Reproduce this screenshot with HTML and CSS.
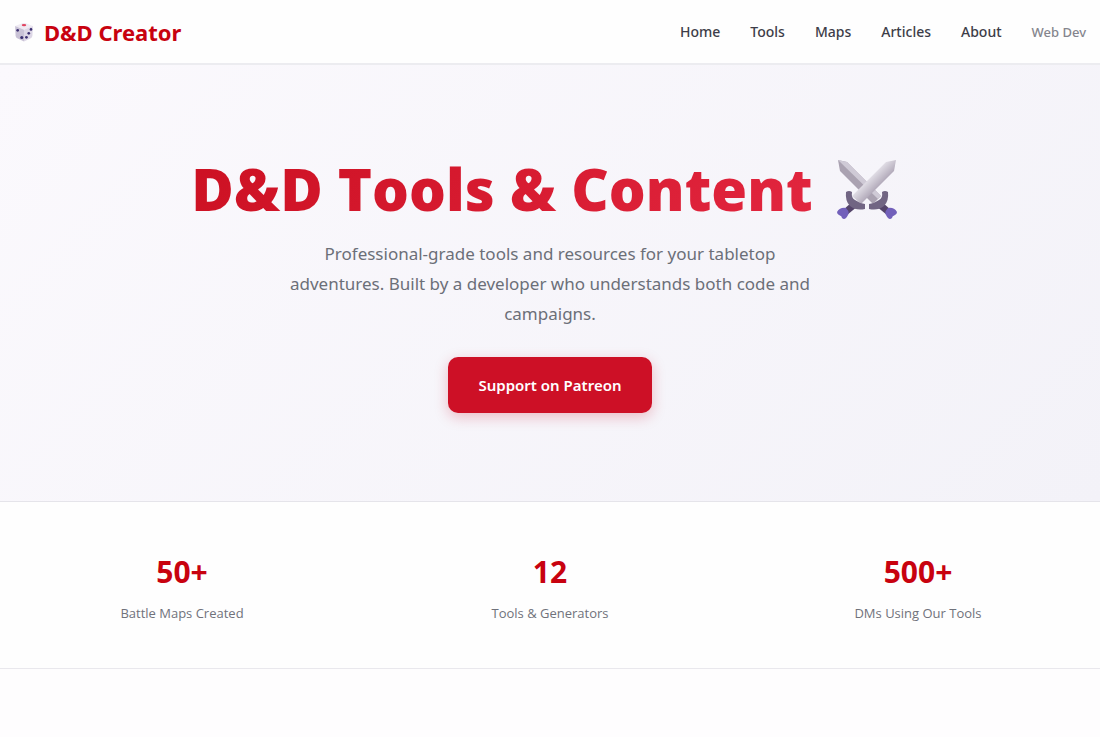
FILE: index.html
```html
<!DOCTYPE html>
<html lang="en">
<head>
    <meta charset="UTF-8">
    <meta name="viewport" content="width=device-width, initial-scale=1.0">
    <title>D&amp;D Creator</title>
    <link rel="stylesheet" href="styles.css">
</head>
<body>
    <header class="site-header">
        <a href="#" class="logo">
            <svg class="logo-icon" viewBox="0 0 18 18" aria-hidden="true">
                <path d="M1 3.500L8 1Q9 .6 10 1L17 3.500L9 7Z" fill="#efeaf3"/>
                <path d="M1 3.500L9 7V17.500L2.500 14.500Q1.500 14 1.400 12Z" fill="#c9c2d6"/>
                <path d="M17 3.500L9 7V17.500L15.500 14.500Q16.500 14 16.600 12Z" fill="#ddd7e6"/>
                <ellipse cx="9" cy="2.800" rx="2" ry="1.100" fill="#e0445f"/>
                <g fill="#3b2f70">
                    <circle cx="3.300" cy="7.500" r="1.200"/>
                    <circle cx="7" cy="14" r="1.400"/>
                    <circle cx="15.300" cy="6.700" r="1.200"/>
                    <circle cx="13.300" cy="10.200" r="1.200"/>
                    <circle cx="11.200" cy="13.800" r="1.200"/>
                </g>
            </svg>
            D&amp;D Creator
        </a>
        <nav class="nav-links">
            <a href="#">Home</a>
            <a href="#tools">Tools</a>
            <a href="#maps">Maps</a>
            <a href="#articles">Articles</a>
            <a href="#about">About</a>
            <a href="#web-dev" class="nav-secondary">Web Dev</a>
        </nav>
    </header>

    <section class="hero">
        <h1>
            <span class="hero-title">D&amp;D Tools &amp; Content</span>
            <svg class="hero-icon" viewBox="0 0 60 60" aria-hidden="true">
                <defs>
                    <linearGradient id="blade" x1="0" y1="0" x2="1" y2="1">
                        <stop offset="0.400" stop-color="#e2dfe7"/>
                        <stop offset="0.600" stop-color="#b3abbb"/>
                    </linearGradient>
                    <g id="hilt">
                        <path d="M16 42L21 47L10 56L5 52Z" fill="#54446a"/>
                        <path d="M9 33Q12 31 15 33Q14 39 18 41Q22 44 28 45V50Q19 52 13 47Q8 42 9 33Z" fill="#716583"/>
                        <path d="M0 53Q3 48 9 49Q13 53 11 56Q8 62 5 59Q5 57 2 56Q0 55 0 53Z" fill="#7260ba"/>
                    </g>
                </defs>
                <path d="M1 1L10 3L44 37L36 45L3 12Z" fill="#aaa2b1"/>
                <path d="M1 1L10 3L44 37L41 40Z" fill="#cfcad6"/>
                <path d="M59 1L49 3L15 37L24 45L57 12Z" fill="url(#blade)"/>
                <use href="#hilt"/>
                <use href="#hilt" transform="matrix(-1 0 0 1 60 0)"/>
            </svg>
        </h1>
        <p class="hero-text">Professional-grade tools and resources for your tabletop adventures. Built by a developer who understands both code and campaigns.</p>
        <a href="#patreon" class="btn-primary">Support on Patreon</a>
    </section>

    <section class="stats">
        <div class="stat">
            <div class="stat-number">50+</div>
            <div class="stat-label">Battle Maps Created</div>
        </div>
        <div class="stat">
            <div class="stat-number">12</div>
            <div class="stat-label">Tools &amp; Generators</div>
        </div>
        <div class="stat">
            <div class="stat-number">500+</div>
            <div class="stat-label">DMs Using Our Tools</div>
        </div>
    </section>
</body>
</html>
```
FILE: styles.css
```css
* {
    box-sizing: border-box;
}

body {
    margin: 0;
    font-family: "Noto Sans", "Open Sans", sans-serif;
    background-color: #fefdfe;
    color: #374151;
}

a {
    text-decoration: none;
}

.site-header {
    display: flex;
    align-items: center;
    justify-content: space-between;
    height: 65px;
    padding: 0 14px;
    background-color: #fefefe;
    border-bottom: 2px solid #ececf0;
}

.logo {
    display: flex;
    align-items: center;
    gap: 10px;
    color: #c8020f;
    font-size: 22px;
    font-weight: 700;
}

.logo-icon {
    width: 20px;
    height: 20px;
}

.nav-links {
    display: flex;
    align-items: center;
    gap: 30px;
}

.nav-links a {
    color: #3d3d48;
    font-size: 14px;
    font-weight: 500;
}

.nav-links .nav-secondary {
    color: #85858d;
    font-size: 13px;
}

/* Hero */
.hero {
    display: flex;
    flex-direction: column;
    align-items: center;
    padding: 90px 14px 88px;
    text-align: center;
    background: linear-gradient(135deg, #fbf9fd 0%, #f3f2f8 100%);
}

.hero h1 {
    display: flex;
    align-items: center;
    justify-content: center;
    gap: 24px;
    margin: 0 0 16px;
    padding-right: 12px;
    font-family: "Open Sans", "Noto Sans", sans-serif;
    font-size: 58px;
    font-weight: 800;
    line-height: 68px;
}

.hero-title {
    background: linear-gradient(135deg, #cc1022 0%, #e2263f 100%);
    background-clip: text;
    -webkit-background-clip: text;
    color: transparent;
}

.hero-icon {
    width: 60px;
    height: 60px;
}

.hero-text {
    max-width: 540px;
    margin: 0 0 28px;
    color: #6c6f78;
    font-size: 17px;
    line-height: 30px;
}

.btn-primary {
    padding: 16px 31px;
    border-radius: 10px;
    background-color: #cd1026;
    box-shadow: 0 4px 14px rgba(205, 16, 38, 0.25);
    color: #fff;
    font-size: 15px;
    font-weight: 600;
    line-height: 24px;
}

/* Stats */
.stats {
    display: grid;
    grid-template-columns: repeat(3, 1fr);
    gap: 32px;
    padding: 52px 14px 45px;
    border-top: 1px solid #e5e4ea;
    border-bottom: 1px solid #e9e8ed;
    background-color: #fefefe;
    text-align: center;
}

.stat-number {
    margin-bottom: 13px;
    color: #c8020f;
    font-size: 30px;
    font-weight: 700;
    line-height: 36px;
}

.stat-label {
    color: #70727b;
    font-family: "Open Sans", "Noto Sans", sans-serif;
    font-size: 13px;
    line-height: 20px;
}
```
